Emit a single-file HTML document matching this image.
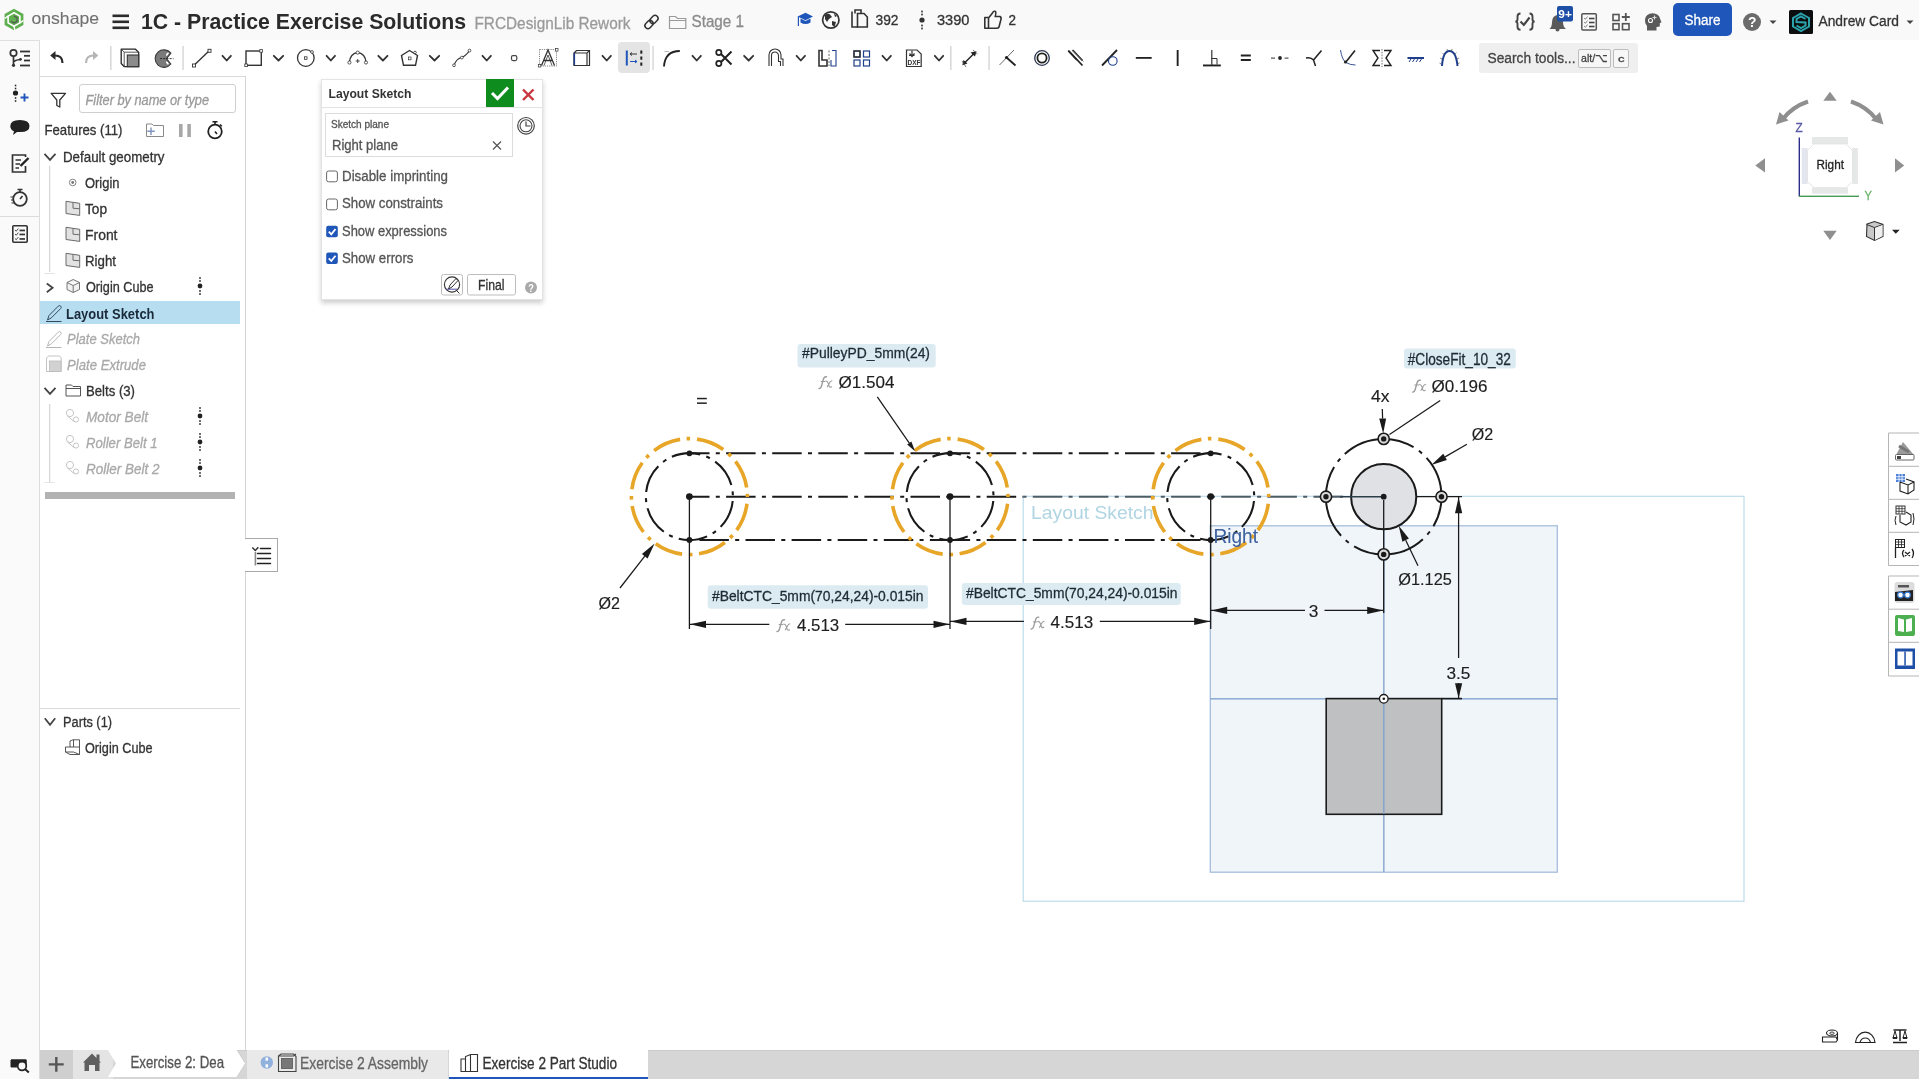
<!DOCTYPE html><html><head><meta charset="utf-8"><style>
html,body{margin:0;padding:0;width:1919px;height:1079px;overflow:hidden;background:#fff;font-family:"Liberation Sans",sans-serif;}
svg text{font-family:"Liberation Sans",sans-serif;}
</style></head><body>
<div style="position:absolute;left:0;top:0;width:1919px;height:40px;background:#f9f9f9"></div>
<div style="position:absolute;left:0;top:40px;width:40px;height:1039px;background:#fafafa;border-right:1px solid #dcdcdc;border-top:1px solid #e0e0e0;box-sizing:border-box"></div>
<div style="position:absolute;left:40px;top:76px;width:206px;height:974px;background:#fff;border-right:1px solid #d4d4d4;border-top:1px solid #d9d9d9;box-sizing:border-box"></div>
<div style="position:absolute;left:40px;top:1050px;width:1879px;height:29px;background:#d6d6d6;box-shadow:inset 0 1px 0 #cbcbcb"></div>
<div style="position:absolute;left:40px;top:1050px;width:33px;height:29px;background:#cfcfcf"></div>
<div style="position:absolute;left:73px;top:1050px;width:40px;height:29px;background:#e4e4e4"></div>
<div style="position:absolute;left:247px;top:1050px;width:201px;height:29px;background:#e9e9e9"></div>
<div style="position:absolute;left:449px;top:1050px;width:199px;height:27px;background:#fff;border-bottom:2px solid #1f56b9"></div>
<div style="position:absolute;left:40px;top:708px;width:200px;height:1px;background:#d9d9d9"></div>
<div style="position:absolute;left:40px;top:301px;width:200px;height:23px;background:#b6def0"></div>
<div style="position:absolute;left:45px;top:492px;width:190px;height:7px;background:#b2b2b2"></div>
<div style="position:absolute;left:79px;top:84px;width:157px;height:29px;border:1px solid #cfcfcf;border-radius:3px;box-sizing:border-box;background:#fff"></div>
<div style="position:absolute;left:1479px;top:43px;width:159px;height:30px;background:#efefef;border-radius:3px"></div>
<div style="position:absolute;left:1578px;top:49px;width:33px;height:19px;border:1px solid #bdbdbd;border-radius:2px;box-sizing:border-box;background:#f7f7f7"></div>
<div style="position:absolute;left:1613px;top:49px;width:16px;height:19px;border:1px solid #bdbdbd;border-radius:2px;box-sizing:border-box;background:#f7f7f7"></div>
<div style="position:absolute;left:618px;top:42px;width:32px;height:31px;background:#e4e4e4;border-radius:4px"></div>
<div style="position:absolute;left:1673px;top:3px;width:59px;height:33px;background:#1f56b9;border-radius:5px"></div>
<div style="position:absolute;left:245px;top:538px;width:33px;height:34px;background:#fff;border:1px solid #a9a9a9;border-left:none;box-sizing:border-box"></div>
<div style="position:absolute;left:321px;top:79px;width:222px;height:221px;background:#fff;box-shadow:0 3px 5px rgba(0,0,0,0.2);border:1px solid #e4e4e4;box-sizing:border-box"></div>
<svg width="1919" height="1079" viewBox="0 0 1919 1079" style="position:absolute;left:0;top:0;will-change:transform">
<path d="M108,1050 L237,1050 L245.5,1063.5 L237,1077 L108,1077 L116,1063.5 Z" fill="#fff"/>
<path d="M237,1050 L245.5,1063.5 L237,1077" fill="none" stroke="#cfcfcf" stroke-width="1"/>
<g transform="translate(14,19.5)"><path d="M0,-10.8 L9.4,-5.4 L9.4,5.4 L0,10.8 L-9.4,5.4 L-9.4,-5.4 Z" fill="#5fae4f"/><path d="M0,-6.8 L5.9,-3.4 L5.9,3.4 L0,6.8 L-5.9,3.4 L-5.9,-3.4 Z" fill="none" stroke="#fff" stroke-width="1.6"/><path d="M0,-3.6 L3.1,-1.8 L3.1,1.8 L0,3.6 L-3.1,1.8" fill="none" stroke="#555" stroke-width="1.2"/><path d="M-9.4,-1 L-5.9,-3.4 M9.4,1 L5.9,3.4 M1,10.8 L0,6.8" stroke="#fff" stroke-width="1.4"/></g>
<rect x="112.5" y="14.5" width="16.5" height="2.6" fill="#2b2b2b"/>
<rect x="112.5" y="20.5" width="16.5" height="2.6" fill="#2b2b2b"/>
<rect x="112.5" y="26.5" width="16.5" height="2.6" fill="#2b2b2b"/>
<g transform="translate(651.5,22) rotate(-45)" fill="none" stroke="#333" stroke-width="1.5"><rect x="-8" y="-3" width="9" height="6" rx="3"/><rect x="-1" y="-3" width="9" height="6" rx="3"/></g>
<path d="M669.5,16.5 L675.5,16.5 L677.5,18.5 L685.8,18.5 L685.8,28.5 L669.5,28.5 Z M669.5,20.5 L685.8,20.5" fill="none" stroke="#9a9a9a" stroke-width="1.2"/>
<path d="M797.6,16.5 L805.5,12.8 L813,16.5 L805.5,20.2 Z" fill="#1f56b9"/><path d="M800.5,18.5 L800.5,22.5 Q805.5,25.5 810.5,22.5 L810.5,18.5 L805.5,21 Z" fill="#1f56b9"/><rect x="797.8" y="16.5" width="1.2" height="9.5" fill="#1f56b9"/>
<circle cx="830.8" cy="20" r="8.2" fill="none" stroke="#333" stroke-width="1.7"/><path d="M825,15 Q828,13 830,14.5 L832,17 L829,19 L827,22 L825,19 Z M832,21 L836,22 L834.5,27 L832,25 Z M834,13.5 L837,16 L835,17 Z" fill="#333"/>
<path d="M852,11.5 L852,27 L858,27 M855,13.5 L855,10 L861,10 L861,13" fill="none" stroke="#333" stroke-width="1.6"/><path d="M857.5,13.5 L864,13.5 L867.3,17 L867.3,27 L857.5,27 Z" fill="none" stroke="#333" stroke-width="1.6"/>
<circle cx="922" cy="20" r="2.6" fill="#333"/>
<rect x="921.2" y="10.6" width="1.6" height="1.8" fill="#333"/>
<rect x="921.2" y="13.6" width="1.6" height="1.8" fill="#333"/>
<rect x="921.2" y="24.6" width="1.6" height="1.8" fill="#333"/>
<rect x="921.2" y="27.6" width="1.6" height="1.8" fill="#333"/>
<path d="M984.8,17.5 L988.5,17.5 L988.5,28.3 L984.8,28.3 Z M988.5,18 L992.5,13 Q993.5,10.5 995.5,11.5 Q996.5,13 995.2,16.5 L1000,16.5 Q1001.8,17.5 1000.8,20 L999,27 Q998.3,28.3 996.5,28.3 L988.5,28.3" fill="none" stroke="#333" stroke-width="1.6" stroke-linejoin="round"/>
<path d="M1520.5,13.5 Q1517.5,13.5 1517.5,16.5 L1517.5,19.5 Q1517.5,21.6 1515.3,21.6 Q1517.5,21.6 1517.5,23.7 L1517.5,26.8 Q1517.5,29.8 1520.5,29.8 M1529.5,13.5 Q1532.5,13.5 1532.5,16.5 L1532.5,19.5 Q1532.5,21.6 1534.7,21.6 Q1532.5,21.6 1532.5,23.7 L1532.5,26.8 Q1532.5,29.8 1529.5,29.8" fill="none" stroke="#444" stroke-width="1.9"/><path d="M1520.5,21.5 L1523.8,25 L1529.5,17.5" fill="none" stroke="#444" stroke-width="2.1"/>
<path d="M1549.5,29 Q1552,27 1552,22 Q1552,16 1557.5,15 Q1563,16 1563,22 Q1563,27 1566,29 Z" fill="#5a5a5a"/><circle cx="1557.5" cy="29.5" r="2" fill="#5a5a5a"/>
<rect x="1557" y="6" width="16" height="15.5" rx="2" fill="#1d4fa6"/>
<rect x="1581.8" y="13.8" width="14.5" height="16.3" rx="1" fill="none" stroke="#555" stroke-width="1.5"/>
<path d="M1584,18 L1585.5,19.3 L1587.5,16.5" fill="none" stroke="#777" stroke-width="0.9"/><rect x="1589" y="17.7" width="5.5" height="1.6" fill="#444"/>
<path d="M1584,22 L1585.5,23.3 L1587.5,20.5" fill="none" stroke="#777" stroke-width="0.9"/><rect x="1589" y="21.7" width="5.5" height="1.6" fill="#444"/>
<path d="M1584,26 L1585.5,27.3 L1587.5,24.5" fill="none" stroke="#777" stroke-width="0.9"/><rect x="1589" y="25.7" width="5.5" height="1.6" fill="#444"/>
<g fill="none" stroke="#555" stroke-width="1.6"><rect x="1613" y="14.5" width="6" height="6"/><rect x="1613" y="23.7" width="6" height="6"/><rect x="1622.5" y="23.7" width="6.5" height="6"/></g><path d="M1625.8,13 L1625.8,21 M1621.8,17 L1629.8,17" stroke="#555" stroke-width="1.8"/>
<path d="M1647,30.5 L1647,26 Q1644.5,23 1645,19.5 Q1646,13.5 1652.5,13.3 Q1659,13.5 1660.2,19 L1661.5,22.5 L1659.8,23 L1659.8,26.5 L1656.5,27 L1656.5,30.5 Z" fill="#5a5a5a"/><circle cx="1650.5" cy="20.5" r="2" fill="none" stroke="#fff" stroke-width="1.1"/><path d="M1654.5,15.5 L1654.5,19.5 M1652.5,17.5 L1656.5,17.5" stroke="#ddd" stroke-width="1.1"/>
<circle cx="1752" cy="22" r="9" fill="#6b6b6b"/>
<path d="M1769.5,20.5 L1776.5,20.5 L1773,24 Z" fill="#444"/>
<rect x="1789" y="10" width="24" height="24" rx="1.5" fill="#0b0d0e"/><path d="M1801,13.5 L1809,18 L1809,26.5 L1801,31 L1793,26.5 L1793,18 Z" fill="none" stroke="#2aa3ad" stroke-width="2"/><path d="M1805.5,19 L1801,16.5 L1796.5,19 L1796.5,22 L1805.5,22.5 L1805.5,25.5 L1801,28 L1796.5,25.5" fill="none" stroke="#2aa3ad" stroke-width="2"/>
<path d="M1906.5,20.5 L1913.5,20.5 L1910,24 Z" fill="#444"/>
<circle cx="13.5" cy="53" r="3.2" fill="none" stroke="#333" stroke-width="1.7"/><path d="M13.5,56.2 L13.5,65.5 M13.5,62 Q15,60 20.5,59.5" fill="none" stroke="#333" stroke-width="1.7"/><circle cx="13.5" cy="65.3" r="1.6" fill="#333"/><circle cx="20.5" cy="59.3" r="1.4" fill="#333"/>
<rect x="20" y="50.6" width="10" height="1.8" fill="#333"/>
<rect x="24" y="54.9" width="6" height="1.8" fill="#333"/>
<rect x="24" y="59.6" width="6" height="1.8" fill="#333"/>
<rect x="20" y="64.6" width="10" height="1.8" fill="#333"/>
<path d="M62.5,63 Q62.5,55.5 55,55.5 L52,55.5" fill="none" stroke="#2b2b2b" stroke-width="2.2"/><path d="M50.2,55.5 L55.5,51 L55.5,60 Z" fill="#2b2b2b"/>
<path d="M86,63 Q86,55.5 93.5,55.5 L96.5,55.5" fill="none" stroke="#b5b5b5" stroke-width="2.2"/><path d="M98.3,55.5 L93,51 L93,60 Z" fill="#b5b5b5"/>
<rect x="110.2" y="46" width="1.3" height="24" fill="#d2d2d2"/>
<rect x="182.4" y="46" width="1.3" height="24" fill="#d2d2d2"/>
<path d="M121.2,49.2 L135.5,49.2 L138.7,52.4 L138.7,66.7 L124.4,66.7 L121.2,63.5 Z" fill="#fff" stroke="#222" stroke-width="1.3" stroke-linejoin="round"/><path d="M121.2,49.2 L124.2,52.2 L138.7,52.2 M124.2,52.2 L124.2,66.7" fill="none" stroke="#444" stroke-width="0.9"/><rect x="127.3" y="55" width="11.4" height="11.7" fill="#8c8c8c" stroke="#333" stroke-width="1.1"/>
<path d="M170.9,53.2 A8.8,8.8 0 1 0 170.9,64 L166.5,58.6 Z" fill="#7a7a7a" stroke="#3a3a3a" stroke-width="1.1" stroke-linejoin="round"/><ellipse cx="167.3" cy="54.2" rx="1.3" ry="2.4" transform="rotate(40 167.3 54.2)" fill="#fff" stroke="#444" stroke-width="0.5"/><ellipse cx="167.3" cy="63" rx="1.3" ry="2.4" transform="rotate(-40 167.3 63)" fill="#fff" stroke="#444" stroke-width="0.5"/><path d="M160,58.6 L173.5,58.6" stroke="#222" stroke-width="0.9" stroke-dasharray="2 1.2"/>
<path d="M193.8,65.5 L209.5,50.6" stroke="#333" stroke-width="1.4"/><rect x="192.5" y="64" width="3" height="3" fill="#fff" stroke="#333" stroke-width="0.9"/><rect x="208" y="49.3" width="3" height="3" fill="#fff" stroke="#333" stroke-width="0.9"/>
<path d="M222.5,55.8 L226.7,60.5 L230.89999999999998,55.8" fill="none" stroke="#333" stroke-width="1.8" stroke-linecap="round" stroke-linejoin="round"/>
<rect x="246" y="51" width="15.3" height="14.3" fill="none" stroke="#333" stroke-width="1.4"/><rect x="244.8" y="64" width="2.6" height="2.6" fill="#fff" stroke="#333" stroke-width="0.8"/><rect x="259.8" y="49.6" width="2.6" height="2.6" fill="#fff" stroke="#333" stroke-width="0.8"/>
<path d="M273.8,55.8 L278.5,60.5 L283.2,55.8" fill="none" stroke="#333" stroke-width="1.8" stroke-linecap="round" stroke-linejoin="round"/>
<circle cx="305.8" cy="58" r="8.3" fill="none" stroke="#333" stroke-width="1.3"/><rect x="304.5" y="56.8" width="2.5" height="2.5" fill="none" stroke="#333" stroke-width="0.8"/><circle cx="312" cy="52" r="1.4" fill="#fff" stroke="#333" stroke-width="0.8"/>
<path d="M326.6,55.8 L330.8,60.5 L335.0,55.8" fill="none" stroke="#333" stroke-width="1.8" stroke-linecap="round" stroke-linejoin="round"/>
<path d="M349.4,62.5 A8.2,9.8 0 0 1 366,62.5" fill="none" stroke="#333" stroke-width="1.3"/><circle cx="349.4" cy="62.5" r="1.6" fill="#fff" stroke="#333" stroke-width="0.8"/><circle cx="366" cy="62.5" r="1.6" fill="#fff" stroke="#333" stroke-width="0.8"/><circle cx="357.7" cy="52.6" r="1.6" fill="#fff" stroke="#333" stroke-width="0.8"/><path d="M355.7,61 L359.7,61 M357.7,59 L357.7,63" stroke="#333" stroke-width="0.9"/>
<path d="M378.3,55.8 L382.9,60.5 L387.5,55.8" fill="none" stroke="#333" stroke-width="1.8" stroke-linecap="round" stroke-linejoin="round"/>
<path d="M409.5,50.5 L417.5,55.5 L415.5,65.3 L403.5,65.3 L401.5,55.5 Z" fill="none" stroke="#333" stroke-width="1.4"/><rect x="408.5" y="57" width="2.5" height="2.8" fill="none" stroke="#333" stroke-width="0.7"/><circle cx="415" cy="52.5" r="1.3" fill="#fff" stroke="#333" stroke-width="0.8"/>
<path d="M429.8,55.8 L434.5,60.5 L439.2,55.8" fill="none" stroke="#333" stroke-width="1.8" stroke-linecap="round" stroke-linejoin="round"/>
<path d="M454,65.5 Q456,59 461.5,57.5 Q466,56 469.5,50.5" fill="none" stroke="#333" stroke-width="1.2"/><circle cx="454" cy="65.3" r="1.4" fill="#fff" stroke="#333" stroke-width="0.8"/><circle cx="461.8" cy="57.6" r="1.4" fill="#fff" stroke="#333" stroke-width="0.8"/><circle cx="469.5" cy="50.6" r="1.4" fill="#fff" stroke="#333" stroke-width="0.8"/>
<path d="M482.5,55.8 L486.7,60.5 L490.9,55.8" fill="none" stroke="#333" stroke-width="1.8" stroke-linecap="round" stroke-linejoin="round"/>
<rect x="511.5" y="55.6" width="5.3" height="5" rx="1.5" fill="none" stroke="#444" stroke-width="1.2"/>
<rect x="539.5" y="49.5" width="17" height="16.5" fill="none" stroke="#555" stroke-width="0.7" stroke-dasharray="1.2 1"/><path d="M541.5,65.5 L548,50 L554.5,65.5 M543.5,60.5 L552.5,60.5" fill="none" stroke="#333" stroke-width="1.3"/><path d="M544,65.5 L548,55 L552,65.5" fill="none" stroke="#333" stroke-width="0.8"/><rect x="538.3" y="64.5" width="2.5" height="2.5" fill="#fff" stroke="#333" stroke-width="0.7"/><rect x="555.5" y="48.6" width="2.5" height="2.5" fill="#fff" stroke="#333" stroke-width="0.7"/>
<path d="M574,53 L576.5,50.5 L589.5,50.5 L589.5,65.5 L574,65.5 Z M574,53 L587,53 L589.5,50.5 M587,53 L587,65.5" fill="none" stroke="#333" stroke-width="1.2"/><path d="M574.3,53 L574.3,65.3" stroke="#1f3f8a" stroke-width="1.6"/>
<path d="M602.5,55.8 L606.7,60.5 L610.9000000000001,55.8" fill="none" stroke="#333" stroke-width="1.8" stroke-linecap="round" stroke-linejoin="round"/>
<rect x="625.8" y="50.5" width="2" height="15" fill="#1f56b9"/><rect x="640.3" y="50.5" width="2" height="3.2" fill="#222"/><rect x="640.3" y="56.5" width="2" height="3.2" fill="#222"/><rect x="640.3" y="62.5" width="2" height="3.2" fill="#222"/><path d="M630,54 L637,54 M630,54 L632,52.5 M630,54 L632,55.5" fill="none" stroke="#333" stroke-width="1"/><path d="M630,61.5 L637,61.5 M637,61.5 L635,60 M637,61.5 L635,63" fill="none" stroke="#1f56b9" stroke-width="1"/>
<rect x="652.4" y="46" width="1.3" height="24" fill="#d2d2d2"/>
<path d="M664,66.5 Q665,51 679.8,51" fill="none" stroke="#222" stroke-width="1.8"/><path d="M664.5,51.5 L669,51.5" stroke="#999" stroke-width="0.7"/>
<path d="M692.5,55.8 L696.7,60.5 L700.9000000000001,55.8" fill="none" stroke="#333" stroke-width="1.8" stroke-linecap="round" stroke-linejoin="round"/>
<circle cx="718.8" cy="52.5" r="2.6" fill="none" stroke="#222" stroke-width="1.7"/><circle cx="718.8" cy="63.5" r="2.6" fill="none" stroke="#222" stroke-width="1.7"/><path d="M721,54 L731.5,64.5 M721,62 L731.5,51.5" stroke="#222" stroke-width="2"/>
<path d="M744.0999999999999,55.8 L748.65,60.5 L753.2,55.8" fill="none" stroke="#333" stroke-width="1.8" stroke-linecap="round" stroke-linejoin="round"/>
<path d="M769,66 L769,55 A6,6 0 0 1 781,55 L781,59 L783,59 L783,66" fill="none" stroke="#333" stroke-width="1.1"/><path d="M771.5,66 L771.5,55.5 A3.5,3.5 0 0 1 778.5,55.5 L778.5,61.5 L780.5,61.5 L780.5,66" fill="none" stroke="#333" stroke-width="1.1"/>
<path d="M796.5999999999999,55.8 L800.8,60.5 L805.0,55.8" fill="none" stroke="#333" stroke-width="1.8" stroke-linecap="round" stroke-linejoin="round"/>
<path d="M819,50.5 L819,66 L827,66 L827,60 L822,60 L822,50.5 Z" fill="none" stroke="#333" stroke-width="1.6"/><path d="M829,50.5 L829,66" stroke="#555" stroke-width="0.9" stroke-dasharray="2 1.5"/><path d="M832,50.5 L836,50.5 L836,66 L831,66 L831,60" fill="none" stroke="#1f3f8a" stroke-width="1.1"/>
<g fill="none" stroke="#1f3f8a" stroke-width="1.2"><rect x="854" y="51" width="6" height="6"/><rect x="863.5" y="51" width="6" height="6"/><rect x="854" y="60" width="6" height="6"/><rect x="863.5" y="60" width="6" height="6"/></g><rect x="854" y="51" width="6" height="6" fill="none" stroke="#333" stroke-width="1.4"/>
<path d="M882.5,55.8 L886.7,60.5 L890.9000000000001,55.8" fill="none" stroke="#333" stroke-width="1.8" stroke-linecap="round" stroke-linejoin="round"/>
<path d="M906.5,50 L917,50 L921.2,54 L921.2,66.5 L906.5,66.5 Z" fill="none" stroke="#333" stroke-width="1.2"/><path d="M912,50.5 L912,56 M909.5,53.5 L912,56.5 L914.5,53.5 M909,55.5 L914.5,55.5" stroke="#333" stroke-width="1.2" fill="none"/>
<path d="M934.8,55.8 L939.0,60.5 L943.2,55.8" fill="none" stroke="#333" stroke-width="1.8" stroke-linecap="round" stroke-linejoin="round"/>
<rect x="950.1999999999999" y="46" width="1.3" height="24" fill="#d2d2d2"/>
<rect x="988.4" y="46" width="1.3" height="24" fill="#d2d2d2"/>
<path d="M963.5,64 L975,52.5" stroke="#222" stroke-width="1.4"/><path d="M962.3,65.3 L963.5,60 L967.5,63.5 Z M976.5,51.2 L970.5,52.5 L975,56.5 Z" fill="#222"/><path d="M962,61 L966,67 M973,50 L977.5,54" stroke="#555" stroke-width="0.8"/>
<path d="M999.5,65 L1014,50" stroke="#444" stroke-width="0.8"/><path d="M1006.5,57.5 L1015.5,65.5" stroke="#222" stroke-width="1.8"/><circle cx="1006.5" cy="57.5" r="1.6" fill="#222"/>
<circle cx="1042" cy="58" r="7.3" fill="none" stroke="#2b3550" stroke-width="1.3"/><circle cx="1042" cy="58" r="4.6" fill="none" stroke="#222" stroke-width="1.8"/>
<path d="M1068.5,51 L1077,60 M1072.5,50 L1082.5,60.5" stroke="#222" stroke-width="1.8"/><path d="M1074,55 L1083,65" stroke="#888" stroke-width="0"/><path d="M1068.5,51 L1078,61.5 M1072.8,50 L1083,60.8" stroke="none"/>
<path d="M1068.3,50.5 L1082.5,65.5" stroke="#222" stroke-width="1.8"/><path d="M1072,50 L1083.3,61.5" stroke="#555" stroke-width="1"/>
<path d="M1102,65.5 L1117,50" stroke="#222" stroke-width="1.8"/><circle cx="1112.8" cy="61" r="4.3" fill="none" stroke="#1f3f8a" stroke-width="1.1"/>
<rect x="1135.8" y="57" width="15.9" height="1.8" fill="#222"/><rect x="1176.7" y="50" width="1.9" height="16" fill="#222"/>
<rect x="1203" y="64.5" width="17.8" height="1.9" fill="#222"/><rect x="1211.2" y="50" width="1.2" height="15" fill="#333"/><path d="M1211.5,58.5 L1217,58.5 L1217,64.5" fill="none" stroke="#333" stroke-width="1"/>
<rect x="1240.8" y="54.5" width="10" height="2" fill="#222"/><rect x="1240.8" y="59" width="10" height="2" fill="#222"/>
<rect x="1271" y="57.6" width="4" height="1" fill="#333"/><rect x="1284.5" y="57.6" width="4" height="1" fill="#333"/><circle cx="1280" cy="58" r="1.9" fill="#222"/>
<path d="M1306,58 Q1311,57 1313.5,60 L1321.5,50.5 M1313.5,60 L1315.5,66" fill="none" stroke="#222" stroke-width="1.5"/>
<path d="M1340.5,50 Q1342,60 1346,62.5 Q1350,65 1355.5,65" fill="none" stroke="#1f3f8a" stroke-width="0.9"/><path d="M1345.5,62.5 L1355,50.5" stroke="#222" stroke-width="1.6"/><circle cx="1345.5" cy="62" r="1.6" fill="#222"/>
<path d="M1380,50.5 L1373,50.5 L1378,58 L1373,65.5 L1380,65.5 M1384,50.5 L1391,50.5 L1386,58 L1391,65.5 L1384,65.5" fill="none" stroke="#222" stroke-width="1.4"/><path d="M1382,49 L1382,67" stroke="#555" stroke-width="0.8" stroke-dasharray="1.6 1.2"/>
<rect x="1407.5" y="57" width="16.5" height="2" fill="#1f3f8a"/><path d="M1409,62 L1411,59 M1412.5,62 L1414.5,59 M1416,62 L1418,59 M1419.5,62 L1421.5,59" stroke="#1f3f8a" stroke-width="1"/>
<path d="M1442,66 Q1443,51 1449.5,51 Q1456,51 1457.5,66" fill="none" stroke="#1f3f8a" stroke-width="2"/><path d="M1441,64 L1439.5,63 M1442,59 L1440,58 M1444,54.5 L1442.5,53 M1447.5,51 L1447,49 M1451.5,51 L1452,49 M1455,54 L1456.5,52.5 M1457,59 L1459,58 M1458,63.5 L1459.5,63" stroke="#666" stroke-width="0.8"/>
<circle cx="15.5" cy="93" r="2.6" fill="#222"/>
<rect x="14.8" y="84.7" width="1.5" height="1.6" fill="#222"/>
<rect x="14.8" y="87.7" width="1.5" height="1.6" fill="#222"/>
<rect x="14.8" y="97.2" width="1.5" height="1.6" fill="#222"/>
<rect x="14.8" y="100.2" width="1.5" height="1.6" fill="#222"/>
<path d="M24.5,93.5 L24.5,101.5 M20.5,97.5 L28.5,97.5" stroke="#1f56b9" stroke-width="1.9"/>
<path d="M19.8,120 Q29.5,120 29.5,126 Q29.5,132 20.5,132 L17,132 L13,135 L14,131.3 Q10.3,130 10.3,126 Q10.3,120 19.8,120 Z" fill="#222"/>
<path d="M25.5,157 L25.5,155 L12.5,155 L12.5,172 L25.5,172 L25.5,166" fill="none" stroke="#333" stroke-width="1.7"/><path d="M15.5,160 L21,160 M15.5,164 L20,164 M15.5,168 L19,168" stroke="#333" stroke-width="1.4"/><path d="M20.5,166 L28.5,158" stroke="#222" stroke-width="2.4"/>
<circle cx="20" cy="199" r="6.8" fill="none" stroke="#333" stroke-width="1.8"/><path d="M17.5,189.5 L22.5,189.5 M20,189.5 L20,192.2 M20,199 L22.5,196" stroke="#333" stroke-width="1.6"/><path d="M10.5,197 L14,197 M11,200 L13.5,200 M11.5,203 L14,203" stroke="#333" stroke-width="1.2"/>
<rect x="0" y="216" width="39" height="1" fill="#dcdcdc"/>
<rect x="12.8" y="225.8" width="14.4" height="16.5" rx="1" fill="none" stroke="#333" stroke-width="1.6"/>
<path d="M15,230 L16.3,231.2 L18.3,228.6" fill="none" stroke="#333" stroke-width="0.9"/><rect x="19.5" y="229.6" width="5.5" height="1.7" fill="#333"/>
<path d="M15,234 L16.3,235.2 L18.3,232.6" fill="none" stroke="#333" stroke-width="0.9"/><rect x="19.5" y="233.6" width="5.5" height="1.7" fill="#333"/>
<path d="M15,238.5 L16.3,239.7 L18.3,237.1" fill="none" stroke="#333" stroke-width="0.9"/><rect x="19.5" y="238.1" width="5.5" height="1.7" fill="#333"/>
<path d="M11,1060 L26,1060 L26,1064 M11,1060 L11,1067 L17,1067" fill="#222" stroke="#222" stroke-width="1"/><rect x="11" y="1059.5" width="15.5" height="7" fill="#222"/>
<circle cx="22" cy="1066" r="4.3" fill="#f7f7f7" stroke="#222" stroke-width="1.7"/><path d="M25,1069 L28.8,1072.5" stroke="#222" stroke-width="2"/>
<path d="M51.2,93.3 L65.5,93.3 L59.8,100 L59.8,107 L56.8,105.5 L56.8,100 Z" fill="none" stroke="#333" stroke-width="1.3" stroke-linejoin="round"/>
<path d="M146.5,124 L152,124 L153.5,125.5 L163.5,125.5 L163.5,136.5 L146.5,136.5 Z" fill="none" stroke="#8a8a8a" stroke-width="1"/><path d="M151,127.5 L151,135 M147.3,131.3 L154.8,131.3" stroke="#7d93bb" stroke-width="1.4"/>
<rect x="179" y="124" width="3.6" height="13" fill="#a8a8a8"/><rect x="187.3" y="124" width="3.6" height="13" fill="#a8a8a8"/>
<circle cx="215" cy="131.5" r="6.8" fill="none" stroke="#222" stroke-width="1.8"/><path d="M212.5,121.8 L217.5,121.8 M215,121.8 L215,124.5 M220,124.5 L221.8,126.3 M215,131.5 L217,134" stroke="#222" stroke-width="1.6"/>
<path d="M44.5,153.8 L50.0,159.8 L55.5,153.8" fill="none" stroke="#444" stroke-width="1.8"/>
<rect x="49.3" y="166" width="0.9" height="106" fill="#c8c8c8"/><rect x="44.5" y="273" width="10" height="0.9" fill="#e0e0e0"/>
<circle cx="72.7" cy="182.5" r="3.3" fill="none" stroke="#777" stroke-width="0.9"/><circle cx="72.7" cy="182.5" r="1.4" fill="#777"/>
<path d="M66,201.29999999999998 L79.7,203.29999999999998 L79.7,215.4 L66,213.5 Z" fill="#e2e2e2" stroke="#6a6a6a" stroke-width="1"/><path d="M73,202.29999999999998 L73,208.2 L79.7,208.79999999999998" fill="none" stroke="#6a6a6a" stroke-width="1"/>
<path d="M66,227.29999999999998 L79.7,229.29999999999998 L79.7,241.4 L66,239.5 Z" fill="#e2e2e2" stroke="#6a6a6a" stroke-width="1"/><path d="M73,228.29999999999998 L73,234.2 L79.7,234.79999999999998" fill="none" stroke="#6a6a6a" stroke-width="1"/>
<path d="M66,253.29999999999998 L79.7,255.29999999999998 L79.7,267.4 L66,265.5 Z" fill="#e2e2e2" stroke="#6a6a6a" stroke-width="1"/><path d="M73,254.29999999999998 L73,260.2 L79.7,260.8" fill="none" stroke="#6a6a6a" stroke-width="1"/>
<path d="M46.8,283.5 L52.6,287.8 L46.8,292.2" fill="none" stroke="#444" stroke-width="1.8"/>
<path d="M73.2,279.5 L79.5,282.5 L79.5,289.5 L73.2,292.5 L67,289.5 L67,282.5 Z M67,282.5 L73.2,285.5 L79.5,282.5 M73.2,285.5 L73.2,292.5" fill="#f2f2f2" stroke="#666" stroke-width="0.9"/>
<circle cx="200" cy="286" r="2.4" fill="#222"/>
<rect x="199.2" y="277.2" width="1.6" height="1.6" fill="#222"/>
<rect x="199.2" y="280.2" width="1.6" height="1.6" fill="#222"/>
<rect x="199.2" y="290.2" width="1.6" height="1.6" fill="#222"/>
<rect x="199.2" y="293.2" width="1.6" height="1.6" fill="#222"/>
<circle cx="200" cy="416" r="2.4" fill="#222"/>
<rect x="199.2" y="407.2" width="1.6" height="1.6" fill="#222"/>
<rect x="199.2" y="410.2" width="1.6" height="1.6" fill="#222"/>
<rect x="199.2" y="420.2" width="1.6" height="1.6" fill="#222"/>
<rect x="199.2" y="423.2" width="1.6" height="1.6" fill="#222"/>
<circle cx="200" cy="442" r="2.4" fill="#222"/>
<rect x="199.2" y="433.2" width="1.6" height="1.6" fill="#222"/>
<rect x="199.2" y="436.2" width="1.6" height="1.6" fill="#222"/>
<rect x="199.2" y="446.2" width="1.6" height="1.6" fill="#222"/>
<rect x="199.2" y="449.2" width="1.6" height="1.6" fill="#222"/>
<circle cx="200" cy="468" r="2.4" fill="#222"/>
<rect x="199.2" y="459.2" width="1.6" height="1.6" fill="#222"/>
<rect x="199.2" y="462.2" width="1.6" height="1.6" fill="#222"/>
<rect x="199.2" y="472.2" width="1.6" height="1.6" fill="#222"/>
<rect x="199.2" y="475.2" width="1.6" height="1.6" fill="#222"/>
<path d="M47.5,320 L49,315.5 L58.2,306.2 Q59.5,305 60.8,306.2 Q61.8,307.4 60.6,308.6 L51.4,317.8 Z M46,321.5 L61.5,321.5" fill="none" stroke="#34495e" stroke-width="1"/>
<path d="M47.5,346 L49,341.5 L58.2,332.2 Q59.5,331 60.8,332.2 Q61.8,333.4 60.6,334.6 L51.4,343.8 Z M46,347.5 L61.5,347.5" fill="none" stroke="#b5b5b5" stroke-width="1"/>
<path d="M46.5,358 L48.5,356 L59.5,356 L61.2,358 L61.2,371.5 L46.5,371.5 Z" fill="none" stroke="#bcbcbc" stroke-width="0.9"/><rect x="49.5" y="361" width="11.5" height="10.5" fill="#d2d2d2" stroke="#bcbcbc" stroke-width="0.8"/>
<path d="M44.5,387.8 L50.0,393.8 L55.5,387.8" fill="none" stroke="#444" stroke-width="1.8"/>
<path d="M66,385 L71.5,385 L73,386.5 L80.5,386.5 L80.5,396 L66,396 Z M66,388.5 L80.5,388.5" fill="none" stroke="#555" stroke-width="1"/>
<circle cx="70" cy="413" r="3.6" fill="none" stroke="#c4c4c4" stroke-width="1"/><circle cx="76" cy="419.5" r="2.6" fill="none" stroke="#c4c4c4" stroke-width="1"/><path d="M67.5,416 L74,421.5" stroke="#c4c4c4" stroke-width="1"/>
<circle cx="70" cy="439" r="3.6" fill="none" stroke="#c4c4c4" stroke-width="1"/><circle cx="76" cy="445.5" r="2.6" fill="none" stroke="#c4c4c4" stroke-width="1"/><path d="M67.5,442 L74,447.5" stroke="#c4c4c4" stroke-width="1"/>
<circle cx="70" cy="465" r="3.6" fill="none" stroke="#c4c4c4" stroke-width="1"/><circle cx="76" cy="471.5" r="2.6" fill="none" stroke="#c4c4c4" stroke-width="1"/><path d="M67.5,468 L74,473.5" stroke="#c4c4c4" stroke-width="1"/>
<rect x="49.3" y="404" width="0.9" height="78" fill="#c8c8c8"/><rect x="44.5" y="482" width="10" height="0.9" fill="#e0e0e0"/>
<path d="M44.8,718.3 L50.0,724.8 L55.2,718.3" fill="none" stroke="#444" stroke-width="1.8"/>
<path d="M65.5,747 L70,747 L70,741 L73,739.8 L79.5,739.8 L79.5,754.5 L70,754.5 L65.5,752 Z M70,747 L73.5,747 L73.5,740 M73.5,747 L79.5,747 M65.5,752 L73.5,752 L79.5,754.5" fill="none" stroke="#444" stroke-width="0.9"/>
<path d="M252.3,547.5 L255.3,550.5 L258.3,547.2" fill="none" stroke="#333" stroke-width="1.5"/><rect x="254.6" y="552" width="1.6" height="13.5" fill="#8a8a8a"/><path d="M260.5,548.5 L270.5,548.5 M257.5,553.5 L270.5,553.5 M257.5,558.5 L270.5,558.5 M257.5,563.5 L270.5,563.5" stroke="#222" stroke-width="1.5" stroke-linecap="round"/>
<path d="M56.3,1057 L56.3,1071.8 M48.8,1064.4 L63.7,1064.4" stroke="#555" stroke-width="2.4"/>
<path d="M83,1062.5 L92,1053.5 L96.5,1058 L96.5,1054.5 L99.5,1054.5 L99.5,1061 L101,1062.5 L99.5,1062.5 L99.5,1071 L95,1071 L95,1065 L89,1065 L89,1071 L84.5,1071 L84.5,1062.5 Z" fill="#5f5f5f"/>
<circle cx="266.8" cy="1062.5" r="6.2" fill="#8fb1dc"/><path d="M266.8,1057.5 L266.8,1067.5" stroke="#fff" stroke-width="2.5"/><circle cx="266.8" cy="1062.5" r="2" fill="#8fb1dc"/>
<path d="M278.5,1056 L281,1054 L293.5,1054 L296,1056.5 L296,1071.5 L278.5,1071.5 Z M278.5,1056 L293.5,1056 L296,1054" fill="none" stroke="#444" stroke-width="1.1"/><rect x="281.5" y="1058.5" width="11" height="10" fill="#777" stroke="#555" stroke-width="0.8"/>
<path d="M461,1059 L465.5,1059 L465.5,1071.5 L461,1071.5 Z M465.5,1071.5 L465.5,1056.5 L470.5,1054.5 L477.5,1054.5 L477.5,1071.5 L465.5,1071.5 M470.5,1054.5 L470.5,1071.5" fill="none" stroke="#333" stroke-width="1.1"/>
<path d="M1822.5,1037 L1836,1037 L1837.5,1040 L1836,1042 L1822.5,1042 Z" fill="#fff" stroke="#222" stroke-width="1.1"/><ellipse cx="1832" cy="1033" rx="5.5" ry="3" fill="#fff" stroke="#222" stroke-width="1.1"/><ellipse cx="1832" cy="1033.2" rx="2.2" ry="1.2" fill="none" stroke="#222" stroke-width="0.9"/><path d="M1837.5,1033 L1837.5,1040" stroke="#222" stroke-width="1.1"/>
<path d="M1855.5,1042.5 A9.8,11.5 0 0 1 1875,1042.5 Z" fill="#fff" stroke="#222" stroke-width="1.2"/><path d="M1860,1042.5 A5.5,6.5 0 0 1 1870.5,1042.5" fill="none" stroke="#222" stroke-width="1.1"/>
<path d="M1893.5,1030 L1906.5,1030 M1900,1030 L1900,1041 M1893,1042.5 L1907,1042.5" stroke="#222" stroke-width="1.5"/><path d="M1895,1031 L1893,1038 L1897,1038 Z M1905,1031 L1903,1038 L1907,1038 Z" fill="none" stroke="#222" stroke-width="1"/><path d="M1892.8,1038 L1897.2,1038 M1902.8,1038 L1907.2,1038" stroke="#222" stroke-width="2"/>
<rect x="321" y="107" width="221" height="1" fill="#e3e3e3"/>
<rect x="486" y="79" width="28" height="28" fill="#0f8c1e"/><path d="M492,93 L497.5,98.5 L508,87.5" fill="none" stroke="#fff" stroke-width="3"/>
<path d="M523,89.5 L533.5,100 M533.5,89.5 L523,100" stroke="#c9353f" stroke-width="2.4"/>
<rect x="325.5" y="113.5" width="187" height="43" fill="#fff" stroke="#dcdcdc" stroke-width="1"/>
<path d="M493,141.5 L501,149.5 M501,141.5 L493,149.5" stroke="#555" stroke-width="1.2"/>
<circle cx="526" cy="125.8" r="8.3" fill="none" stroke="#444" stroke-width="1.2"/><circle cx="526" cy="125.8" r="6" fill="none" stroke="#444" stroke-width="1.1"/><path d="M526,121.5 L526,126 L530.5,126" fill="none" stroke="#444" stroke-width="1.2"/>
<rect x="326.6" y="171.0" width="10.8" height="10.8" rx="2" fill="#fff" stroke="#666" stroke-width="1"/>
<rect x="326.6" y="199.0" width="10.8" height="10.8" rx="2" fill="#fff" stroke="#666" stroke-width="1"/>
<rect x="326.2" y="225.7" width="11.6" height="11.6" rx="2" fill="#1f56b9"/><path d="M328.8,231.7 L331.3,234.29999999999998 L335.5,229.0" fill="none" stroke="#fff" stroke-width="1.8"/>
<rect x="326.2" y="252.4" width="11.6" height="11.6" rx="2" fill="#1f56b9"/><path d="M328.8,258.4 L331.3,261.0 L335.5,255.70000000000002" fill="none" stroke="#fff" stroke-width="1.8"/>
<rect x="441.5" y="274.5" width="21" height="20.5" rx="2" fill="#fff" stroke="#bdbdbd" stroke-width="1"/><circle cx="452" cy="284.5" r="7.6" fill="none" stroke="#333" stroke-width="1.1"/><path d="M448.5,289 L450,285 L456,278.5 L458,280.5 L452,287 Z M456.5,290.5 L459.5,293.5" fill="none" stroke="#333" stroke-width="1"/><path d="M446.5,289.2 L457,289.2" stroke="#3b3b9a" stroke-width="0.9"/>
<rect x="467.5" y="274.5" width="48" height="20.5" rx="2" fill="#fff" stroke="#bdbdbd" stroke-width="1"/>
<circle cx="531" cy="287.4" r="6" fill="#a9a9a9"/>
<path d="M1823.3,100.8 L1830,91.7 L1836.7,100.8 Z" fill="#8f8f8f"/>
<path d="M1823.3,230.8 L1836.7,230.8 L1830,240 Z" fill="#8f8f8f"/>
<path d="M1765,158.3 L1765,172.5 L1755.3,165.4 Z" fill="#8f8f8f"/>
<path d="M1895,158.3 L1895,172.5 L1904.2,165.4 Z" fill="#8f8f8f"/>
<path d="M1808,101.5 Q1792,107 1783,119" fill="none" stroke="#8f8f8f" stroke-width="4"/><path d="M1776,124.5 L1779.5,112 L1788.5,120.5 Z" fill="#8f8f8f"/>
<path d="M1851,101.5 Q1867,107 1876,119" fill="none" stroke="#8f8f8f" stroke-width="4"/><path d="M1883.5,124.5 L1880,112 L1871,120.5 Z" fill="#8f8f8f"/>
<rect x="1811.9" y="137" width="36.1" height="7" fill="#e6e8e8"/><rect x="1811.9" y="187.5" width="36.1" height="6.2" fill="#e6e8e8"/><rect x="1801.8" y="148" width="5.8" height="36" fill="#e3e5ef"/><rect x="1852.3" y="148" width="5.6" height="36" fill="#e6e8e8"/>
<path d="M1814,143.9 L1846,143.9 L1852.5,150.5 L1852.5,181.5 L1846,187.7 L1814,187.7 L1807.4,181.5 L1807.4,150.5 Z" fill="#fff" stroke="#e4e4e4" stroke-width="1" stroke-linejoin="round"/>
<rect x="1798.6" y="137.5" width="1.4" height="59" fill="#2d2d8a"/><rect x="1799" y="195.6" width="60" height="1.4" fill="#4a9a55"/>
<path d="M1867,224 L1874.5,221.5 L1883,224.5 L1883,236.5 L1874.5,240.5 L1866.5,236.5 Z" fill="#c9c9c9" stroke="#333" stroke-width="1.1"/><path d="M1866.5,224.5 L1874.5,227.5 L1883,224.5 M1874.5,227.5 L1874.5,240.5" fill="none" stroke="#333" stroke-width="1"/><path d="M1875,228 L1882.5,225 L1882.5,236 L1875,240 Z" fill="#efefef"/>
<path d="M1892,229.7 L1899.7,229.7 L1895.8,233.7 Z" fill="#222"/>
<path d="M1888.5,433 L1919,433 M1888.5,433 L1888.5,565.5 L1919,565.5 M1888.5,466.3 L1919,466.3 M1888.5,499.3 L1919,499.3 M1888.5,532.3 L1919,532.3" fill="none" stroke="#b5b5b5" stroke-width="1"/>
<path d="M1888.5,576 L1919,576 M1888.5,576 L1888.5,676 L1919,676 M1888.5,609.2 L1919,609.2 M1888.5,642.3 L1919,642.3" fill="none" stroke="#b5b5b5" stroke-width="1"/>
<path d="M1896,455 L1903,442 L1914,455 Z" fill="#9a9a9a"/><path d="M1899,446 L1909,452" stroke="#777" stroke-width="3"/><rect x="1895.5" y="454.5" width="18.5" height="5.5" rx="1" fill="#fff" stroke="#666" stroke-width="1"/><rect x="1897" y="456" width="4" height="3" fill="#444"/>
<g transform="translate(0,0)"><rect x="1896" y="474" width="9" height="8" fill="#4a80d8"/><path d="M1896,476.7 L1905,476.7 M1896,479.3 L1905,479.3 M1899,474 L1899,482 M1902,474 L1902,482" stroke="#fff" stroke-width="0.8"/><path d="M1900,482 L1900,491 L1908,494 L1914,490 L1914,482 L1906,479 M1900,482 L1908,485 L1914,482 M1908,485 L1908,494" fill="none" stroke="#222" stroke-width="1.1"/></g>
<rect x="1896" y="506" width="9" height="8" fill="none" stroke="#333" stroke-width="1"/><path d="M1896,508.7 L1905,508.7 M1896,511.3 L1905,511.3 M1899,506 L1899,514 M1902,506 L1902,514" stroke="#333" stroke-width="0.8"/><path d="M1900,515 L1900,522 L1906,525 L1911,522 L1911,515 L1906,512" fill="none" stroke="#222" stroke-width="1.1"/><path d="M1896,516 Q1894,520 1896,525 M1913,513 Q1915,519 1913,525" fill="none" stroke="#222" stroke-width="1"/>
<rect x="1895.5" y="539.5" width="9" height="8" fill="none" stroke="#222" stroke-width="1"/><path d="M1895.5,542 L1904.5,542 M1895.5,544.6 L1904.5,544.6 M1898.5,539.5 L1898.5,547.5 M1901.5,539.5 L1901.5,547.5" stroke="#222" stroke-width="0.8"/><path d="M1895.5,547.5 L1895.5,558 M1904,550 Q1901,553 1904,557 M1912,549 Q1915,553 1912,558 M1905,552 L1910,556 M1910,552 L1905,556" fill="none" stroke="#222" stroke-width="1.3"/>
<rect x="1894.5" y="582" width="20" height="21" rx="3" fill="#dcdcdc"/><path d="M1895,592 L1913,590 L1913,601 L1895,601 Z" fill="#222"/><circle cx="1900.5" cy="595" r="2.8" fill="#fff" stroke="#3a7bd5" stroke-width="1.2"/><circle cx="1907.5" cy="595" r="2.8" fill="#fff" stroke="#3a7bd5" stroke-width="1.2"/><rect x="1898" y="585" width="11" height="2.5" fill="#555"/>
<rect x="1895" y="615" width="20" height="21" rx="2" fill="#4caf50"/><path d="M1898,618 L1904,619.5 L1904,632 L1898,631 Z M1906,619.5 L1912,618 L1912,631 L1906,632 Z" fill="#fff"/>
<rect x="1895" y="648.5" width="20" height="20.5" fill="#1d4fa6"/><rect x="1897.5" y="651.5" width="15" height="14" fill="#fff"/><rect x="1904.3" y="651.5" width="1.5" height="14" fill="#1d4fa6"/>
<defs><mask id="mL" maskUnits="userSpaceOnUse" x="0" y="0" width="1919" height="1079"><rect x="0" y="0" width="1023.2" height="1079" fill="#fff"/></mask><mask id="mR" maskUnits="userSpaceOnUse" x="0" y="0" width="1919" height="1079"><rect x="1023.2" y="0" width="900" height="1079" fill="#fff"/></mask></defs>
<rect x="1023.2" y="496.3" width="720.8" height="404.9" fill="none" stroke="#bcdcea" stroke-width="1.2"/>
<rect x="1210.3" y="525.8" width="347" height="346.4" fill="#f0f5fa" stroke="#a6bedc" stroke-width="1.3"/>
<rect x="1210.3" y="698.2" width="347" height="1.3" fill="#7c9fcc"/><rect x="1383.2" y="525.8" width="1.3" height="346.4" fill="#7c9fcc"/>
<rect x="1326.2" y="698.6" width="115.5" height="115.7" fill="#bfc0c2" stroke="#1a1a1a" stroke-width="1.6"/>
<rect x="1383.2" y="699" width="1.3" height="115" fill="#7c9fcc"/>
<path d="M1441.7,698.6 L1462,698.6" stroke="#1a1a1a" stroke-width="1.6"/>
<circle cx="1383.8" cy="698.8" r="4.3" fill="#fff" stroke="#1a1a1a" stroke-width="1.3"/><circle cx="1383.8" cy="698.8" r="1.3" fill="#1a1a1a"/>
<path d="M689.4,453.3 L950,453.3" stroke="#1a1a1a" stroke-width="2.1" stroke-dasharray="29.5 6.3 4 6.3" stroke-dashoffset="9.4"/>
<path d="M950,453.3 L1210.7,453.3" stroke="#1a1a1a" stroke-width="2.1" stroke-dasharray="29.5 6.3 4 6.3" stroke-dashoffset="9.4"/>
<path d="M689.4,496.7 L950,496.7" stroke="#1a1a1a" stroke-width="2.1" stroke-dasharray="29.5 6.3 4 6.3" stroke-dashoffset="9.4"/>
<path d="M950,496.7 L1210.7,496.7" stroke="#1a1a1a" stroke-width="2.1" stroke-dasharray="29.5 6.3 4 6.3" stroke-dashoffset="9.4" mask="url(#mL)"/>
<path d="M950,496.7 L1210.7,496.7" stroke="#4e5c66" stroke-width="2.1" stroke-dasharray="29.5 6.3 4 6.3" stroke-dashoffset="9.4" mask="url(#mR)"/>
<path d="M1210.7,496.7 L1326,496.7" stroke="#4e5c66" stroke-width="2.1" stroke-dasharray="29.5 6.3 4 6.3" stroke-dashoffset="35.5"/>
<path d="M1332,496.7 L1343,496.7" stroke="#4e5c66" stroke-width="2.1"/>
<path d="M950,540 L689.4,540" stroke="#1a1a1a" stroke-width="2.1" stroke-dasharray="29.5 6.3 4 6.3" stroke-dashoffset="9.4"/>
<path d="M950,540 L1210.7,540" stroke="#1a1a1a" stroke-width="2.1" stroke-dasharray="29.5 6.3 4 6.3" stroke-dashoffset="9.4"/>
<path d="M1383.7,496.7 L1462,496.7" stroke="#1a1a1a" stroke-width="1.2"/>
<circle cx="689.4" cy="496.6" r="43.5" fill="none" stroke="#1a1a1a" stroke-width="2.1" stroke-dasharray="29 6.3 4 6.25" stroke-dashoffset="41.1"/>
<circle cx="689.4" cy="496.6" r="58" fill="none" stroke="#e8a628" stroke-width="3.6" stroke-dasharray="28.5 6.5 3.6 6.95" stroke-dashoffset="38.3"/>
<path d="M689.4,500 L689.4,629" stroke="#1a1a1a" stroke-width="1.3"/>
<circle cx="689.4" cy="453.3" r="2.9" fill="#1a1a1a"/>
<circle cx="689.4" cy="540" r="2.9" fill="#1a1a1a"/>
<circle cx="689.4" cy="496.6" r="3.4" fill="#1a1a1a"/>
<circle cx="950" cy="496.6" r="43.5" fill="none" stroke="#1a1a1a" stroke-width="2.1" stroke-dasharray="29 6.3 4 6.25" stroke-dashoffset="41.1"/>
<circle cx="950" cy="496.6" r="58" fill="none" stroke="#e8a628" stroke-width="3.6" stroke-dasharray="28.5 6.5 3.6 6.95" stroke-dashoffset="38.3"/>
<path d="M950,500 L950,629" stroke="#1a1a1a" stroke-width="1.3"/>
<circle cx="950" cy="453.3" r="2.9" fill="#1a1a1a"/>
<circle cx="950" cy="540" r="2.9" fill="#1a1a1a"/>
<circle cx="950" cy="496.6" r="3.4" fill="#1a1a1a"/>
<circle cx="1210.7" cy="496.6" r="43.5" fill="none" stroke="#1a1a1a" stroke-width="2.1" stroke-dasharray="29 6.3 4 6.25" stroke-dashoffset="41.1"/>
<circle cx="1210.7" cy="496.6" r="58" fill="none" stroke="#e8a628" stroke-width="3.6" stroke-dasharray="28.5 6.5 3.6 6.95" stroke-dashoffset="38.3"/>
<path d="M1210.7,500 L1210.7,629" stroke="#1a1a1a" stroke-width="1.3"/>
<circle cx="1210.7" cy="453.3" r="2.9" fill="#1a1a1a"/>
<circle cx="1210.7" cy="540" r="2.9" fill="#1a1a1a"/>
<circle cx="1210.7" cy="496.6" r="3.4" fill="#1a1a1a"/>
<circle cx="1383.7" cy="496.7" r="57.8" fill="none" stroke="#1a1a1a" stroke-width="2" stroke-dasharray="74 6.4 4 6.4" stroke-dashoffset="43.1"/>
<circle cx="1383.7" cy="496.7" r="32.6" fill="#dfe1e5" stroke="#1a1a1a" stroke-width="2"/>
<path d="M1340,496.7 L1383.7,496.7" stroke="#2c3e4a" stroke-width="1.6"/><path d="M1383.7,500 L1383.7,613" stroke="#1a1a1a" stroke-width="1.3"/>
<circle cx="1383.7" cy="496.7" r="2.9" fill="#1a1a1a"/>
<circle cx="1383.7" cy="438.9" r="5.6" fill="#d9d9d9" stroke="#1a1a1a" stroke-width="1.6"/><circle cx="1383.7" cy="438.9" r="2.7" fill="#1a1a1a"/>
<circle cx="1326" cy="496.7" r="5.6" fill="#d9d9d9" stroke="#1a1a1a" stroke-width="1.6"/><circle cx="1326" cy="496.7" r="2.7" fill="#1a1a1a"/>
<circle cx="1441.5" cy="496.7" r="5.6" fill="#d9d9d9" stroke="#1a1a1a" stroke-width="1.6"/><circle cx="1441.5" cy="496.7" r="2.7" fill="#1a1a1a"/>
<circle cx="1383.7" cy="554.4" r="5.6" fill="#d9d9d9" stroke="#1a1a1a" stroke-width="1.6"/><circle cx="1383.7" cy="554.4" r="2.7" fill="#1a1a1a"/>
<path d="M689.4,624.3 L769.3,624.3 M845.2,624.3 L950,624.3" stroke="#1a1a1a" stroke-width="1.25"/>
<path d="M690.0,624.3 L706.0,620.7 L706.0,627.9 Z" fill="#1a1a1a"/>
<path d="M949.5,624.3 L933.5,627.9 L933.5,620.7 Z" fill="#1a1a1a"/>
<path d="M950,621.4 L1023.9,621.4 M1099.8,621.4 L1210.7,621.4" stroke="#1a1a1a" stroke-width="1.25"/>
<path d="M950.5,621.4 L966.5,617.8 L966.5,625.0 Z" fill="#1a1a1a"/>
<path d="M1210.2,621.4 L1194.2,625.0 L1194.2,617.8 Z" fill="#1a1a1a"/>
<path d="M1210.7,610.4 L1305,610.4 M1324.5,610.4 L1383.7,610.4" stroke="#1a1a1a" stroke-width="1.25"/>
<path d="M1211.2,610.4 L1227.2,606.8 L1227.2,614.0 Z" fill="#1a1a1a"/>
<path d="M1383.2,610.4 L1367.2,614.0 L1367.2,606.8 Z" fill="#1a1a1a"/>
<path d="M1458.6,496.7 L1458.6,657.9 M1458.6,683 L1458.6,698.6" stroke="#1a1a1a" stroke-width="1.25"/>
<path d="M1458.6,497.2 L1462.2,513.2 L1455.0,513.2 Z" fill="#1a1a1a"/>
<path d="M1458.6,698.2 L1455.0,683.2 L1462.2,683.2 Z" fill="#1a1a1a"/>
<path d="M620.0,588.0 L644.8,556.2" stroke="#1a1a1a" stroke-width="1.25"/>
<path d="M654.6,543.6 L647.6,558.4 L641.9,554.0 Z" fill="#1a1a1a"/>
<path d="M877.3,396.8 L909.3,443.1" stroke="#1a1a1a" stroke-width="1.25"/>
<path d="M915.0,451.3 L907.2,444.6 L911.4,441.6 Z" fill="#1a1a1a"/>
<path d="M1382.3,409.0 L1382.6,418.5" stroke="#1a1a1a" stroke-width="1.25"/>
<path d="M1383.2,433.5 L1379.2,418.6 L1386.1,418.4 Z" fill="#1a1a1a"/>
<path d="M1440.2,400.6 L1389.5,434.5" stroke="#1a1a1a" stroke-width="1.25"/>
<path d="M1466.9,444.2 L1445.1,456.9" stroke="#1a1a1a" stroke-width="1.25"/>
<path d="M1431.3,465.0 L1443.3,453.8 L1446.9,460.0 Z" fill="#1a1a1a"/>
<path d="M1418.0,565.8 L1405.7,540.2" stroke="#1a1a1a" stroke-width="1.25"/>
<path d="M1398.7,525.8 L1408.9,538.6 L1402.4,541.8 Z" fill="#1a1a1a"/>
<rect x="697" y="397.8" width="9.8" height="1.5" fill="#222"/><rect x="697" y="402.4" width="9.8" height="1.5" fill="#222"/>
<rect x="797.5" y="344" width="138.2" height="23.6" rx="3" fill="#dcebf2"/>
<rect x="707.7" y="585.3" width="220.3" height="23.4" rx="3" fill="#dcebf2"/>
<rect x="961.9" y="583" width="218.8" height="22" rx="3" fill="#dcebf2"/>
<rect x="1404" y="348.4" width="111.8" height="20.2" rx="3" fill="#dcebf2"/>
<g transform="translate(818.3,376)" fill="none" stroke="#9d9d9d" stroke-linecap="round"><path d="M0.6,12.6 Q2.6,12.8 3.6,8.5 L5,3.5 Q6,0.3 8.2,0.8" stroke-width="1.4"/><path d="M2.8,5.5 L6.6,5.5" stroke-width="1"/><path d="M7.5,5 Q9.3,5 10,7.5 L11,10.5 Q11.8,11.8 13.2,10.8 M13.6,4.8 Q12,5 10.5,8.2 L9,10.8" stroke-width="1.1"/></g>
<g transform="translate(776.3,619)" fill="none" stroke="#9d9d9d" stroke-linecap="round"><path d="M0.6,12.6 Q2.6,12.8 3.6,8.5 L5,3.5 Q6,0.3 8.2,0.8" stroke-width="1.4"/><path d="M2.8,5.5 L6.6,5.5" stroke-width="1"/><path d="M7.5,5 Q9.3,5 10,7.5 L11,10.5 Q11.8,11.8 13.2,10.8 M13.6,4.8 Q12,5 10.5,8.2 L9,10.8" stroke-width="1.1"/></g>
<g transform="translate(1030.5,616.4)" fill="none" stroke="#9d9d9d" stroke-linecap="round"><path d="M0.6,12.6 Q2.6,12.8 3.6,8.5 L5,3.5 Q6,0.3 8.2,0.8" stroke-width="1.4"/><path d="M2.8,5.5 L6.6,5.5" stroke-width="1"/><path d="M7.5,5 Q9.3,5 10,7.5 L11,10.5 Q11.8,11.8 13.2,10.8 M13.6,4.8 Q12,5 10.5,8.2 L9,10.8" stroke-width="1.1"/></g>
<g transform="translate(1412,379.5)" fill="none" stroke="#9d9d9d" stroke-linecap="round"><path d="M0.6,12.6 Q2.6,12.8 3.6,8.5 L5,3.5 Q6,0.3 8.2,0.8" stroke-width="1.4"/><path d="M2.8,5.5 L6.6,5.5" stroke-width="1"/><path d="M7.5,5 Q9.3,5 10,7.5 L11,10.5 Q11.8,11.8 13.2,10.8 M13.6,4.8 Q12,5 10.5,8.2 L9,10.8" stroke-width="1.1"/></g>
<text x="31.5" y="24" font-size="16.5" fill="#707070" stroke="#707070" stroke-width="0.1" textLength="67.5" lengthAdjust="spacingAndGlyphs" >onshape</text>
<text x="141" y="28.6" font-size="21.74" fill="#2b2b2b" font-weight="bold" textLength="325" lengthAdjust="spacingAndGlyphs" >1C - Practice Exercise Solutions</text>
<text x="474.5" y="28.9" font-size="16.96" fill="#9a9a9a" stroke="#9a9a9a" stroke-width="0.3" textLength="156" lengthAdjust="spacingAndGlyphs" >FRCDesignLib Rework</text>
<text x="691.5" y="27.3" font-size="15.94" fill="#8a8a8a" stroke="#8a8a8a" stroke-width="0.3" textLength="52.5" lengthAdjust="spacingAndGlyphs" >Stage 1</text>
<text x="875.5" y="25.4" font-size="14.49" fill="#333" stroke="#333" stroke-width="0.3" textLength="23" lengthAdjust="spacingAndGlyphs" >392</text>
<text x="937" y="25.4" font-size="14.49" fill="#333" stroke="#333" stroke-width="0.3" textLength="32.5" lengthAdjust="spacingAndGlyphs" >3390</text>
<text x="1008.5" y="25.4" font-size="14.49" fill="#333" stroke="#333" stroke-width="0.3" textLength="7.5" lengthAdjust="spacingAndGlyphs" >2</text>
<text x="1684.5" y="25.1" font-size="15.51" fill="#fff" stroke="#fff" stroke-width="0.3" textLength="36" lengthAdjust="spacingAndGlyphs" >Share</text>
<text x="1818.5" y="25.7" font-size="14.93" fill="#333" stroke="#333" stroke-width="0.3" textLength="80.5" lengthAdjust="spacingAndGlyphs" >Andrew Card</text>
<text x="1487.5" y="63" font-size="15.22" fill="#444" stroke="#444" stroke-width="0.3" textLength="88" lengthAdjust="spacingAndGlyphs" >Search tools...</text>
<text x="1581" y="62" font-size="11.59" fill="#444" stroke="#444" stroke-width="0.3" textLength="27" lengthAdjust="spacingAndGlyphs" >alt/⌥</text>
<text x="1618" y="62" font-size="8.7" fill="#444" stroke="#444" stroke-width="0.3" textLength="6.5" lengthAdjust="spacingAndGlyphs" >c</text>
<text x="85.5" y="104.8" font-size="14.06" fill="#9a9a9a" stroke="#9a9a9a" stroke-width="0.3" font-style="italic" textLength="123.5" lengthAdjust="spacingAndGlyphs" >Filter by name or type</text>
<text x="44.5" y="134.8" font-size="14.2" fill="#333" stroke="#333" stroke-width="0.3" textLength="78" lengthAdjust="spacingAndGlyphs" >Features (11)</text>
<text x="63" y="162" font-size="13.91" fill="#333" stroke="#333" stroke-width="0.3" textLength="101.5" lengthAdjust="spacingAndGlyphs" >Default geometry</text>
<text x="85" y="188" font-size="13.91" fill="#333" stroke="#333" stroke-width="0.3" textLength="34.5" lengthAdjust="spacingAndGlyphs" >Origin</text>
<text x="85" y="214" font-size="13.91" fill="#333" stroke="#333" stroke-width="0.3" textLength="22" lengthAdjust="spacingAndGlyphs" >Top</text>
<text x="85" y="240" font-size="13.91" fill="#333" stroke="#333" stroke-width="0.3" textLength="32.5" lengthAdjust="spacingAndGlyphs" >Front</text>
<text x="85" y="266" font-size="13.91" fill="#333" stroke="#333" stroke-width="0.3" textLength="31" lengthAdjust="spacingAndGlyphs" >Right</text>
<text x="86" y="292" font-size="13.91" fill="#333" stroke="#333" stroke-width="0.3" textLength="67.5" lengthAdjust="spacingAndGlyphs" >Origin Cube</text>
<text x="66" y="318.5" font-size="13.91" fill="#1b2a3a" font-weight="bold" textLength="88.5" lengthAdjust="spacingAndGlyphs" >Layout Sketch</text>
<text x="67" y="344" font-size="13.91" fill="#a9a9a9" stroke="#a9a9a9" stroke-width="0.3" font-style="italic" textLength="73" lengthAdjust="spacingAndGlyphs" >Plate Sketch</text>
<text x="67" y="370" font-size="13.91" fill="#a9a9a9" stroke="#a9a9a9" stroke-width="0.3" font-style="italic" textLength="79" lengthAdjust="spacingAndGlyphs" >Plate Extrude</text>
<text x="86" y="396" font-size="13.91" fill="#333" stroke="#333" stroke-width="0.3" textLength="49" lengthAdjust="spacingAndGlyphs" >Belts (3)</text>
<text x="86" y="422" font-size="13.91" fill="#a9a9a9" stroke="#a9a9a9" stroke-width="0.3" font-style="italic" textLength="62" lengthAdjust="spacingAndGlyphs" >Motor Belt</text>
<text x="86" y="448" font-size="13.91" fill="#a9a9a9" stroke="#a9a9a9" stroke-width="0.3" font-style="italic" textLength="71.5" lengthAdjust="spacingAndGlyphs" >Roller Belt 1</text>
<text x="86" y="474" font-size="13.91" fill="#a9a9a9" stroke="#a9a9a9" stroke-width="0.3" font-style="italic" textLength="73.5" lengthAdjust="spacingAndGlyphs" >Roller Belt 2</text>
<text x="63" y="727" font-size="13.91" fill="#333" stroke="#333" stroke-width="0.3" textLength="49" lengthAdjust="spacingAndGlyphs" >Parts (1)</text>
<text x="85" y="752.7" font-size="13.91" fill="#333" stroke="#333" stroke-width="0.3" textLength="67.5" lengthAdjust="spacingAndGlyphs" >Origin Cube</text>
<text x="130.5" y="1068" font-size="15.65" fill="#555" stroke="#555" stroke-width="0.3" textLength="93.5" lengthAdjust="spacingAndGlyphs" >Exercise 2: Dea</text>
<text x="300" y="1068.9" font-size="15.65" fill="#666" stroke="#666" stroke-width="0.3" textLength="128" lengthAdjust="spacingAndGlyphs" >Exercise 2 Assembly</text>
<text x="482.5" y="1068.9" font-size="15.65" fill="#333" stroke="#333" stroke-width="0.3" textLength="134.5" lengthAdjust="spacingAndGlyphs" >Exercise 2 Part Studio</text>
<text x="328.5" y="97.8" font-size="13.04" fill="#333" font-weight="bold" textLength="83" lengthAdjust="spacingAndGlyphs" >Layout Sketch</text>
<text x="331" y="128.3" font-size="10.43" fill="#555" stroke="#555" stroke-width="0.3" textLength="58" lengthAdjust="spacingAndGlyphs" >Sketch plane</text>
<text x="332" y="150" font-size="14.2" fill="#555" stroke="#555" stroke-width="0.3" textLength="66" lengthAdjust="spacingAndGlyphs" >Right plane</text>
<text x="342" y="181.2" font-size="14.2" fill="#555" stroke="#555" stroke-width="0.3" textLength="106" lengthAdjust="spacingAndGlyphs" >Disable imprinting</text>
<text x="342" y="208.4" font-size="14.2" fill="#555" stroke="#555" stroke-width="0.3" textLength="101" lengthAdjust="spacingAndGlyphs" >Show constraints</text>
<text x="342" y="235.6" font-size="14.2" fill="#555" stroke="#555" stroke-width="0.3" textLength="105" lengthAdjust="spacingAndGlyphs" >Show expressions</text>
<text x="342" y="262.6" font-size="14.2" fill="#555" stroke="#555" stroke-width="0.3" textLength="71.5" lengthAdjust="spacingAndGlyphs" >Show errors</text>
<text x="478" y="290" font-size="13.91" fill="#333" stroke="#333" stroke-width="0.3" textLength="26.5" lengthAdjust="spacingAndGlyphs" >Final</text>
<text x="1816.5" y="168.8" font-size="13.19" fill="#222" stroke="#222" stroke-width="0.3" textLength="27.5" lengthAdjust="spacingAndGlyphs" >Right</text>
<text x="1795.5" y="131.7" font-size="13.33" fill="#5a5aa8" stroke="#5a5aa8" stroke-width="0.3" textLength="7.2" lengthAdjust="spacingAndGlyphs" >Z</text>
<text x="1864.5" y="199.7" font-size="13.04" fill="#66b266" stroke="#66b266" stroke-width="0.3" textLength="7.4" lengthAdjust="spacingAndGlyphs" >Y</text>
<text x="1558.3" y="18" font-size="11" fill="#fff" font-weight="bold" textLength="13.5" lengthAdjust="spacingAndGlyphs" >9+</text>
<text x="1748" y="27" font-size="14" fill="#fff" font-weight="bold" textLength="8.5" lengthAdjust="spacingAndGlyphs" >?</text>
<text x="907.5" y="65" font-size="6.5" fill="#333" font-weight="bold" textLength="13" lengthAdjust="spacingAndGlyphs" >DXF</text>
<text x="528.2" y="291.5" font-size="10" fill="#fff" font-weight="bold" textLength="5.6" lengthAdjust="spacingAndGlyphs" >?</text>
<text x="1031" y="519" font-size="19.28" fill="#b0d5e3" textLength="122.5" lengthAdjust="spacingAndGlyphs" >Layout Sketch</text>
<text x="1213.5" y="543.2" font-size="19.57" fill="#3f62a0" stroke="#3f62a0" stroke-width="0.1" textLength="44.5" lengthAdjust="spacingAndGlyphs" >Right</text>
<text x="802" y="357.9" font-size="15.07" fill="#1d2b36" stroke="#1d2b36" stroke-width="0.3" textLength="128" lengthAdjust="spacingAndGlyphs" >#PulleyPD_5mm(24)</text>
<text x="712" y="600.6" font-size="14.78" fill="#1d2b36" stroke="#1d2b36" stroke-width="0.3" textLength="211.5" lengthAdjust="spacingAndGlyphs" >#BeltCTC_5mm(70,24,24)-0.015in</text>
<text x="966" y="597.7" font-size="14.78" fill="#1d2b36" stroke="#1d2b36" stroke-width="0.3" textLength="211.5" lengthAdjust="spacingAndGlyphs" >#BeltCTC_5mm(70,24,24)-0.015in</text>
<text x="1407.7" y="365" font-size="16.38" fill="#1d2b36" stroke="#1d2b36" stroke-width="0.3" textLength="103.2" lengthAdjust="spacingAndGlyphs" >#CloseFit_10_32</text>
<text x="838.5" y="388.1" font-size="16.52" fill="#1e1e1e" stroke="#1e1e1e" stroke-width="0.15" textLength="56" lengthAdjust="spacingAndGlyphs" >Ø1.504</text>
<text x="797" y="631" font-size="16.23" fill="#1e1e1e" stroke="#1e1e1e" stroke-width="0.15" textLength="42.2" lengthAdjust="spacingAndGlyphs" >4.513</text>
<text x="1050.5" y="628.4" font-size="16.23" fill="#1e1e1e" stroke="#1e1e1e" stroke-width="0.15" textLength="42.7" lengthAdjust="spacingAndGlyphs" >4.513</text>
<text x="1431.5" y="392.3" font-size="16.38" fill="#1e1e1e" stroke="#1e1e1e" stroke-width="0.15" textLength="56" lengthAdjust="spacingAndGlyphs" >Ø0.196</text>
<text x="1371" y="401.8" font-size="15.94" fill="#1e1e1e" stroke="#1e1e1e" stroke-width="0.15" textLength="18.5" lengthAdjust="spacingAndGlyphs" >4x</text>
<text x="1471.8" y="440.4" font-size="15.94" fill="#1e1e1e" stroke="#1e1e1e" stroke-width="0.15" textLength="21.5" lengthAdjust="spacingAndGlyphs" >Ø2</text>
<text x="1398.3" y="585.1" font-size="16.38" fill="#1e1e1e" stroke="#1e1e1e" stroke-width="0.15" textLength="53.5" lengthAdjust="spacingAndGlyphs" >Ø1.125</text>
<text x="1308.7" y="617.2" font-size="16.38" fill="#1e1e1e" stroke="#1e1e1e" stroke-width="0.15" textLength="9.6" lengthAdjust="spacingAndGlyphs" >3</text>
<text x="1446.4" y="679.4" font-size="16.09" fill="#1e1e1e" stroke="#1e1e1e" stroke-width="0.15" textLength="24" lengthAdjust="spacingAndGlyphs" >3.5</text>
<text x="598.5" y="608.8" font-size="16.09" fill="#1e1e1e" stroke="#1e1e1e" stroke-width="0.15" textLength="21.5" lengthAdjust="spacingAndGlyphs" >Ø2</text>
</svg></body></html>
